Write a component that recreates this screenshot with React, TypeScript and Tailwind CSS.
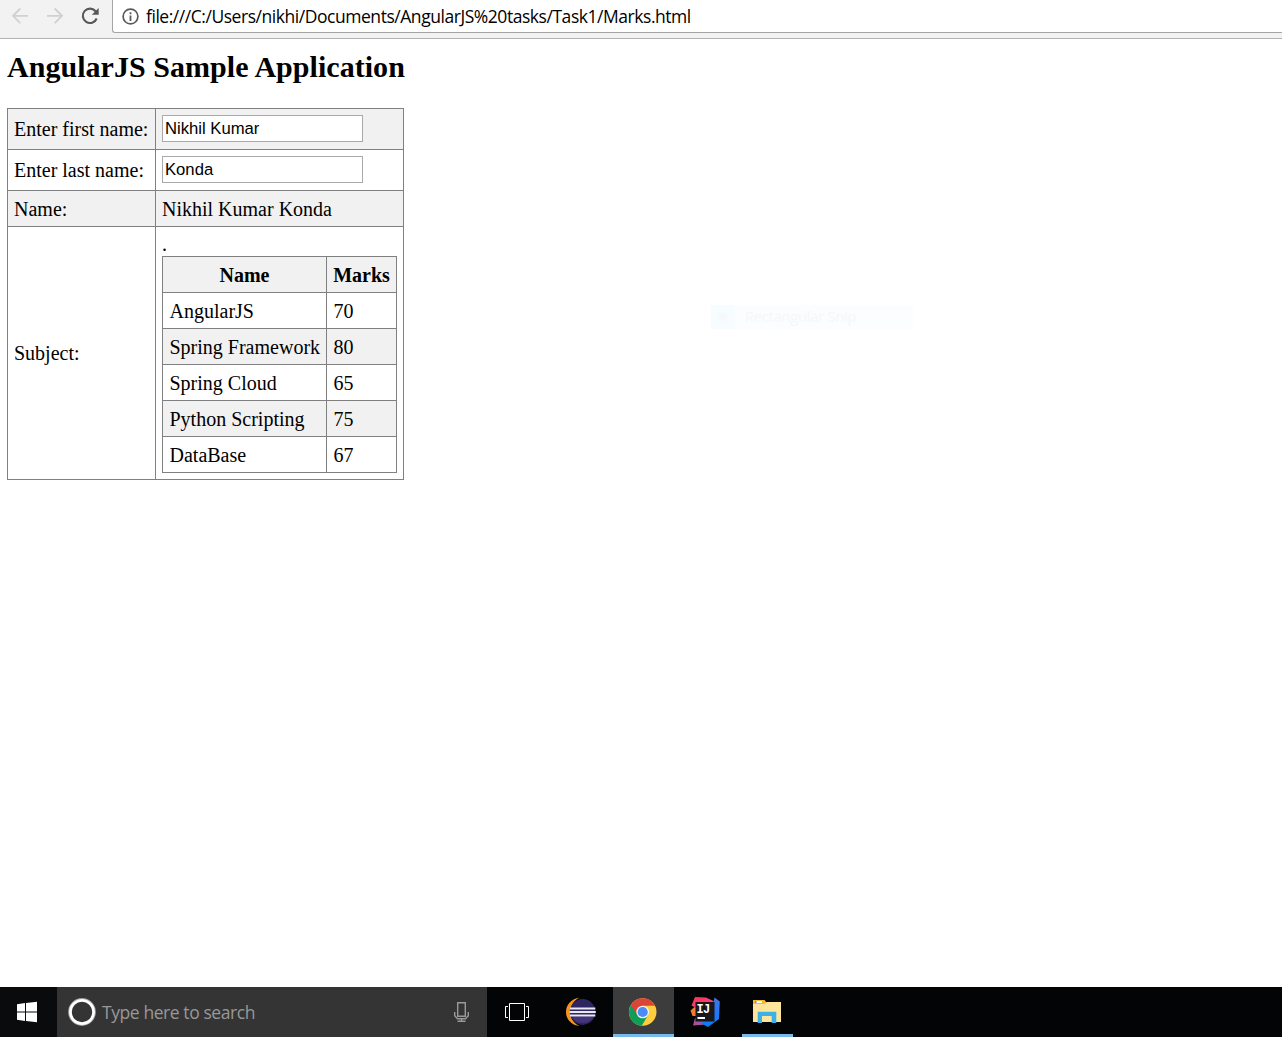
import React from "react";

const subjects = [
  { name: "AngularJS", marks: 70, row: "bg-white" },
  { name: "Spring Framework", marks: 80, row: "bg-[#f1f1f1]" },
  { name: "Spring Cloud", marks: 65, row: "bg-white" },
  { name: "Python Scripting", marks: 75, row: "bg-[#f1f1f1]" },
  { name: "DataBase", marks: 67, row: "bg-white" },
];

function Toolbar() {
  return (
    <header className="flex h-[39px] shrink-0 border-b border-[#b3b3b3] bg-[#f2f2f2]">
      <svg className="h-[33px] w-28 shrink-0" viewBox="0 0 112 33" fill="none">
        <g stroke="#d0d0d0" strokeWidth="1.8">
          <path d="M28 15.8H13M20.3 8.5 13 15.8l7.3 7.3" />
          <path d="M47 15.8h15M54.7 8.5l7.3 7.3-7.3 7.3" />
        </g>
        <path d="M95.8 11.5A7.2 7.2 0 1 0 96.7 18.5" stroke="#575757" strokeWidth="2.1" />
        <path d="M98.7 8v6.8h-6.9z" fill="#575757" />
      </svg>
      <div className="flex h-[33px] grow items-center rounded-bl-[3px] border-b border-l border-[#a5a5a5] bg-white pl-[9px]">
        <svg className="h-[17px] w-[17px] shrink-0" viewBox="0 0 17 17" fill="none">
          <circle cx="8.5" cy="8.5" r="7.4" stroke="#5a5a5a" strokeWidth="1.7" />
          <path d="M8.5 7.5V13M8.5 4.2v2" stroke="#5a5a5a" strokeWidth="1.8" />
        </svg>
        <span className="ml-[7px] whitespace-nowrap pb-px font-['Open_Sans',sans-serif] text-[17.5px] leading-6 tracking-[-0.455px] text-black">
          file:///C:/Users/nikhi/Documents/AngularJS%20tasks/Task1/Marks.html
        </span>
      </div>
    </header>
  );
}

function SubjectTable() {
  return (
    <table className="w-[235px] table-fixed border-separate border-spacing-0 border-l border-t border-[#808080]">
      <thead>
        <tr className="h-9 bg-[#f1f1f1]">
          <th className="w-[164px] border-b border-r border-[#808080] p-0 pt-[2px] text-center">Name</th>
          <th className="w-[70px] border-b border-r border-[#808080] p-0 pt-[2px] text-center">Marks</th>
        </tr>
      </thead>
      <tbody>
        {subjects.map((s) => (
          <tr key={s.name} className={`h-9 ${s.row}`}>
            <td className="whitespace-nowrap border-b border-r border-[#808080] p-0 pl-[6.5px] pt-[2px]">{s.name}</td>
            <td className="border-b border-r border-[#808080] p-0 pl-[6.5px] pt-[2px]">{s.marks}</td>
          </tr>
        ))}
      </tbody>
    </table>
  );
}

function Field({ value }: { value: string }) {
  return (
    <input
      defaultValue={value}
      className="mb-px block h-[27px] w-[201px] border border-[#a9a9a9] bg-white px-[2px] pt-px font-['Liberation_Sans',sans-serif] text-[16.67px] leading-5 text-black outline-none"
    />
  );
}

function MarksForm() {
  const label = "w-[148px] whitespace-nowrap border-b border-r border-[#808080] p-0 pl-[6px] align-middle";
  const cell = "w-[248px] whitespace-nowrap border-b border-r border-[#808080] p-0 pl-[6px] align-middle";
  return (
    <table className="mt-[23px] w-[397px] table-fixed border-separate border-spacing-0 border-l border-t border-[#808080] text-[20px] leading-[23px]">
      <tbody>
        <tr className="h-[41px] bg-[#f1f1f1]">
          <td className={label}>Enter first name:</td>
          <td className={cell}><Field value="Nikhil Kumar" /></td>
        </tr>
        <tr className="h-[41px]">
          <td className={label}>Enter last name:</td>
          <td className={cell}><Field value="Konda" /></td>
        </tr>
        <tr className="h-9 bg-[#f1f1f1]">
          <td className={`${label} pt-[2px]`}>Name:</td>
          <td className={`${cell} pt-[2px]`}>Nikhil Kumar Konda</td>
        </tr>
        <tr className="h-[253px]">
          <td className={label}>Subject:</td>
          <td className={cell}>
            <div className="h-[23px]">.</div>
            <SubjectTable />
          </td>
        </tr>
      </tbody>
    </table>
  );
}

function EclipseIcon() {
  return (
    <svg className="h-[50px] w-16 shrink-0" viewBox="549 987 64 50">
      <path d="M579.5 997.8c-8 1-13.5 6.8-13.5 14.2s5.500 13.200 13.500 14c-6-2.500-9-8-9-14s3-11.700 9-14.200z" fill="#f7941e" />
      <circle cx="582.6" cy="1012" r="12.9" fill="#2f2560" />
      <path d="M572 1017h21.5a12.500 12.500 0 0 1-21.500 0z" fill="#44347c" />
      <path d="M570 1008.500h25.300M569.500 1012h26.300M570 1015.500h25.300" stroke="#e9e8f2" strokeWidth="2.200" />
    </svg>
  );
}

function ChromeIcon() {
  return (
    <svg className="h-[47px] w-[61px]" viewBox="613 987 61 47">
      <circle cx="642.7" cy="1012" r="13.8" fill="#ffcd40" />
      <path d="M630.7 1005.2A13.8 13.8 0 0 0 641.7 1025.8L648.1 1015.1 642.7 1012z" fill="#0f9d58" />
      <path d="M630.7 1005.2 637.3 1015.1 642.7 1005.8H655A13.8 13.8 0 0 0 630.7 1005.2z" fill="#db4437" />
      <circle cx="642.7" cy="1012" r="6.3" fill="#f5f5f5" />
      <circle cx="642.7" cy="1012" r="5.1" fill="#4c8bf5" />
    </svg>
  );
}

function IntelliJIcon() {
  return (
    <svg className="h-[50px] w-[68px] shrink-0" viewBox="674 987 68 50">
      <defs>
        <linearGradient id="ij-pink" x1="0" y1="0" x2="1" y2="1">
          <stop offset="0" stopColor="#fe3158" />
          <stop offset="1" stopColor="#f64a83" />
        </linearGradient>
        <linearGradient id="ij-purple" x1="0" y1="1" x2="1" y2="0">
          <stop offset="0" stopColor="#b1508d" />
          <stop offset="1" stopColor="#765bd0" />
        </linearGradient>
        <linearGradient id="ij-cool" x1="0" y1="0" x2="0" y2="1">
          <stop offset="0" stopColor="#3f74ec" />
          <stop offset="1" stopColor="#087cfa" />
        </linearGradient>
      </defs>
      <path d="M690.500 1010.500l4-3.500 3 1v8h-5z" fill="#f47c2c" />
      <path d="M695 997l11 .500 7.500 3.500 1.500 4-17 4-6.500-3.500z" fill="url(#ij-pink)" />
      <path d="M695 1018l13-1 4 6-6 1.500-13 1z" fill="url(#ij-purple)" />
      <path d="M714.500 997.500l5.300 4-.800 17.500-11 8-7.500-4 10-4z" fill="url(#ij-cool)" />
      <rect x="695.500" y="1002" width="19" height="19.500" fill="#19171b" />
      <text x="696.500" y="1013" fill="#fff" fontFamily="Liberation Mono, monospace" fontSize="12" fontWeight="700" letterSpacing="-.8">IJ</text>
      <path d="M697.500 1018h7.500" stroke="#fff" strokeWidth="2" />
    </svg>
  );
}

function ExplorerIcon() {
  return (
    <svg className="h-[47px] w-[51px]" viewBox="742 987 51 47">
      <path d="M753 1000h11.500l2.500 3-2.500 2H753z" fill="#f8b72f" />
      <path d="M755 1001h7v2h-7z" fill="#fff" />
      <path d="M755 1001h1.500v2H755z" fill="#3aa5dd" />
      <path d="M753 1004h11l3-2h14v20h-28z" fill="#ffe59c" />
      <path d="M757.700 1023v-11.200h18.600v11.200h-4.600v-7h-9.700v7z" fill="#3bb2e7" />
    </svg>
  );
}

function Taskbar() {
  return (
    <footer className="flex h-[50px] shrink-0 bg-[#030405]">
      <svg className="h-[50px] w-[57px] shrink-0 bg-[#090b0d]" viewBox="0 987 57 50">
        <path d="m17 1004.200 8-1.200v8.500h-8zm9-1.300 11-1.200v9.800H26zm-9 9.600h8v8.500l-8-1.200zm9 0h11v9.800l-11-1.200z" fill="#fff" />
      </svg>
      <div className="flex w-[430px] shrink-0 items-center bg-[#343434] pl-[11px] pr-4">
        <svg className="h-7 w-7 shrink-0" viewBox="0 0 28 28" fill="none">
          <circle cx="14" cy="14" r="13.2" stroke="#a0a0a0" strokeWidth="1.4" />
          <circle cx="14" cy="14" r="11.600" stroke="#fff" strokeWidth="2.800" />
        </svg>
        <span className="ml-[6px] grow whitespace-nowrap font-['Open_Sans',sans-serif] text-[17.5px] leading-6 tracking-[-0.42px] text-[#989898]">
          Type here to search
        </span>
        <svg className="h-[22px] w-[18px] shrink-0" viewBox="453 1001 18 22" fill="none" stroke="#9a9a9a" strokeWidth="1.4">
          <path d="M457.700 1002.700h7.600v13.600h-7.600z" />
          <path d="M454.700 1012v3.700l2.800 3h8l2.800-3V1012M461.500 1019v2.500M457.500 1021.300h8" />
        </svg>
      </div>
      <svg className="h-[50px] w-[62px] shrink-0" viewBox="487 987 62 50" fill="none" stroke="#fff">
        <path d="M509.500 1003.500h15v17h-15zM508 1006.500h-2.500v11h2.500M526 1006.500h2.500v11H526" />
      </svg>
      <EclipseIcon />
      <div className="w-[61px] shrink-0 border-b-[3px] border-[#76b9ed] bg-[#3c3c3c]">
        <ChromeIcon />
      </div>
      <IntelliJIcon />
      <div className="w-[51px] shrink-0 border-b-[3px] border-[#76b9ed]">
        <ExplorerIcon />
      </div>
    </footer>
  );
}

export default function App() {
  return (
    <div className="relative flex h-[1037px] w-[1282px] flex-col overflow-hidden bg-white text-black">
      <Toolbar />
      <main className="grow pl-[7px] pt-[9px] font-['Liberation_Serif',serif]">
        <h1 className="whitespace-nowrap text-[30px] font-bold leading-[37px] tracking-[0.04px]">AngularJS Sample Application</h1>
        <MarksForm />
      </main>
      <div className="absolute left-[711px] top-[305px] flex h-6 w-[202px] items-center bg-[#fbfdff]">
        <span className="flex h-6 w-6 items-center justify-center bg-[#f7fcff]">
          <span className="h-2 w-2 rounded-full bg-[#f7f8fa]" />
        </span>
        <span className="ml-[10px] font-['Open_Sans',sans-serif] text-[14.5px] tracking-[-0.15px] text-[#f6f7f8]">Rectangular Snip</span>
      </div>
      <Taskbar />
    </div>
  );
}
